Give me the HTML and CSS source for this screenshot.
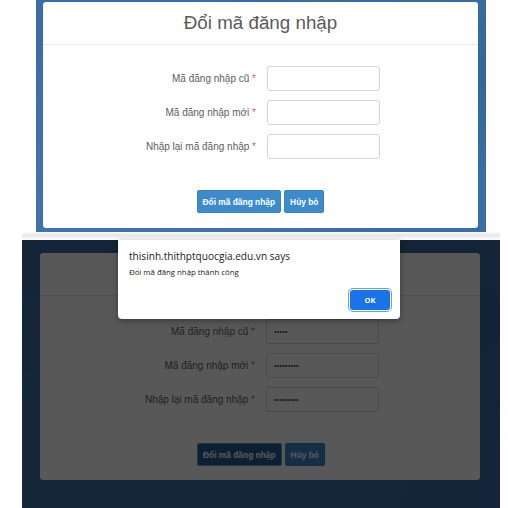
FILE: index.html
```html
<!DOCTYPE html>
<html lang="vi">
<head>
<meta charset="utf-8">
<title>Đổi mã đăng nhập</title>
<link rel="stylesheet" href="styles.css">
</head>
<body>
<div class="page">
  <section class="shot shot-top">
    <div class="modal">
      <div class="modal-header"><h4 class="modal-title">Đổi mã đăng nhập</h4></div>
      <div class="modal-body">
        <div class="form">
          <label class="label">Mã đăng nhập cũ <span class="req">*</span></label>
          <input class="field" type="password">
          <label class="label">Mã đăng nhập mới <span class="req">*</span></label>
          <input class="field" type="password">
          <label class="label">Nhập lại mã đăng nhập <span class="req">*</span></label>
          <input class="field" type="password">
        </div>
        <div class="actions">
          <button class="btn">Đổi mã đăng nhập</button>
          <button class="btn">Hủy bỏ</button>
        </div>
      </div>
    </div>
  </section>

  <div class="strip"></div>

  <section class="shot shot-bottom">
    <div class="modal">
      <div class="modal-header"><h4 class="modal-title covered">Đổi mã đăng nhập</h4></div>
      <div class="modal-body">
        <div class="form">
          <label class="label">Mã đăng nhập cũ <span class="req">*</span></label>
          <div class="field filled">•••••</div>
          <label class="label">Mã đăng nhập mới <span class="req">*</span></label>
          <div class="field filled">•••••••••</div>
          <label class="label">Nhập lại mã đăng nhập <span class="req">*</span></label>
          <div class="field filled">•••••••••</div>
        </div>
        <div class="actions">
          <button class="btn btn-active">Đổi mã đăng nhập</button>
          <button class="btn">Hủy bỏ</button>
        </div>
      </div>
    </div>
    <div class="overlay"></div>
    <div class="alert">
      <div class="alert-title">thisinh.thithptquocgia.edu.vn says</div>
      <div class="alert-msg">Đổi mã đăng nhập thành công</div>
      <div class="alert-actions"><button class="ok">OK</button></div>
    </div>
  </section>
</div>
</body>
</html>
```
FILE: styles.css
```css
* { box-sizing: border-box; }
html, body { margin: 0; padding: 0; background: #fff; }
body { font-family: "Liberation Sans", Arial, sans-serif; width: 508px; height: 508px; overflow: hidden; }

.page { display: flex; flex-direction: column; }

.shot {
  background: #3a6da8;
  background-image:
    radial-gradient(ellipse at 20% 80%, rgba(255,255,255,0.05), transparent 60%),
    radial-gradient(ellipse at 85% 30%, rgba(0,0,0,0.07), transparent 55%);
}

.shot-top {
  margin-left: 36px;
  width: 450px;
  height: 232px;
  padding: 2px 8px 4px 7px;
}

.strip {
  margin-left: 22px;
  width: 478px;
  height: 8px;
  background: linear-gradient(#fafafa 0, #fafafa 1px, #e9e9e9 2px, #ececec 5px, #fafafa 6px);
}

.shot-bottom {
  position: relative;
  margin-left: 22px;
  width: 478px;
  height: 268px;
  padding: 13px 20px 28px 18px;
}

.modal {
  background: #fff;
  border-radius: 3px;
  height: 100%;
  display: flex;
  flex-direction: column;
}

.modal-header {
  height: 43px;
  border-bottom: 1px solid #ebebeb;
  display: flex;
  align-items: center;
  justify-content: center;
}
.modal-title {
  margin: 0;
  font-weight: normal;
  font-size: 18.8px;
  color: #5a5a5a;
}
.modal-title.covered { visibility: hidden; }

.modal-body { padding-top: 21px; }
.shot-bottom .modal-body { padding-top: 23px; padding-left: 2px; }

.form {
  display: grid;
  grid-template-columns: 216px 113px;
  column-gap: 8px;
  row-gap: 9px;
  align-items: center;
}
.label {
  text-align: right;
  font-size: 10px;
  color: #5e5e5e;
  padding-right: 3px;
}
.req { color: #e0605c; }

.field {
  width: 113px;
  height: 25px;
  border: 1px solid #d4d4d4;
  border-radius: 3px;
  background: #fff;
  margin: 0;
  padding: 0 7px;
  font-size: 7px;
  line-height: 23px;
  color: #444;
  letter-spacing: 0.3px;
}

.actions {
  margin-top: 31px;
  display: flex;
  justify-content: center;
  gap: 3px;
}

.btn {
  font-family: "Liberation Sans", Arial, sans-serif;
  height: 23px;
  padding: 0 5px;
  border: 1px solid #3a82c0;
  border-radius: 2px;
  background: #3d8bcc;
  color: #fff;
  font-size: 8.4px;
  font-weight: bold;
  cursor: pointer;
}
.btn-active {
  background: #225d92;
  border-color: #6c9cc8;
}

.overlay {
  position: absolute;
  inset: 0;
  background: rgba(0, 0, 0, 0.655);
}

.alert {
  position: absolute;
  left: 96px;
  top: 0;
  width: 282px;
  height: 79px;
  background: #fff;
  border-radius: 0 0 4px 4px;
  box-shadow: 0 2px 6px rgba(0,0,0,0.35);
  padding: 9px 9px 8px 11px;
  display: flex;
  flex-direction: column;
  font-family: "Open Sans", "Noto Sans", sans-serif;
}
.alert-title {
  font-size: 10.1px;
  color: #202124;
  line-height: 14px;
}
.alert-msg {
  margin-top: 4px;
  font-size: 7.8px;
  color: #202124;
  line-height: 11px;
}
.alert-actions {
  margin-top: auto;
  display: flex;
  justify-content: flex-end;
}
.ok {
  width: 40px;
  height: 20px;
  margin: 1px;
  border: none;
  border-radius: 3px;
  background: #1a73e8;
  color: #fff;
  font-family: "Open Sans", "Noto Sans", sans-serif;
  font-size: 7.5px;
  font-weight: bold;
  box-shadow: 0 0 0 1px #fff, 0 0 0 2px #6aa0ee;
}
```
